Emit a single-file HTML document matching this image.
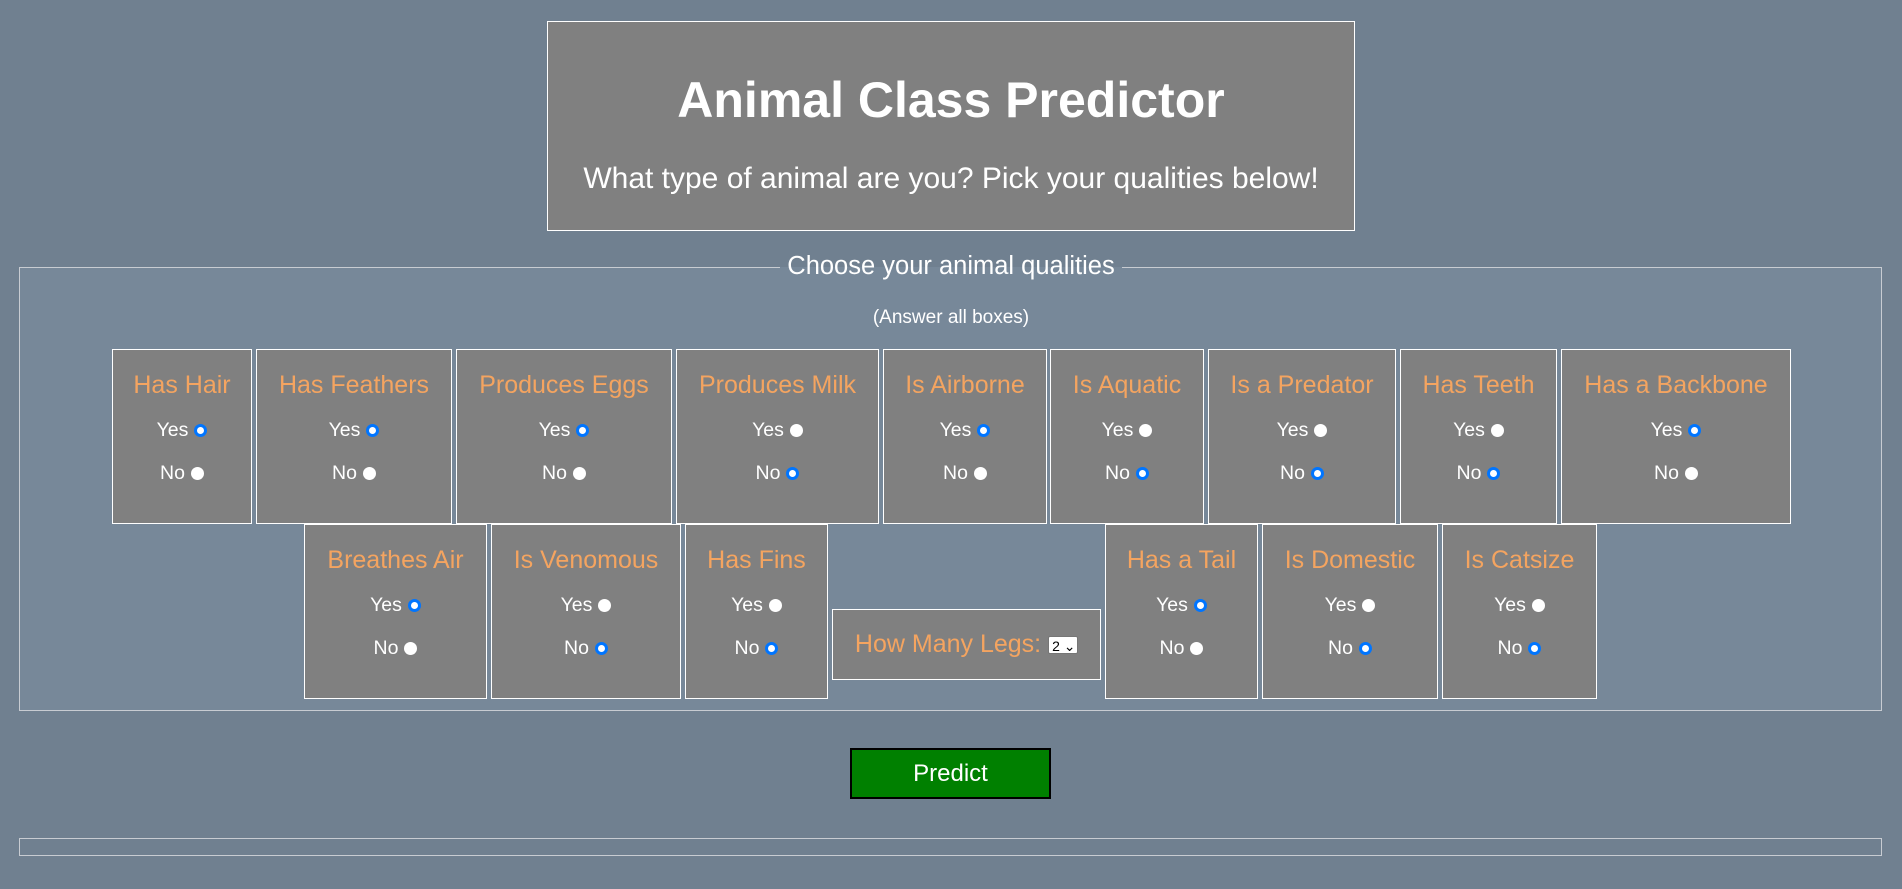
<!DOCTYPE html>
<html><head><meta charset="utf-8"><style>
*{box-sizing:border-box;margin:0;padding:0}
body{width:1902px;height:889px;background:#708090;font-family:"Liberation Sans",Arial,sans-serif;position:relative;overflow:hidden;color:#fff}
.abs{position:absolute}
.hdr{left:547px;top:21px;width:808px;height:210px;background:#808080;border:1px solid #fff;text-align:center}
.hdr h1{position:absolute;left:0;right:0;top:78px;font-size:50px;line-height:56px;margin-top:-28px;font-weight:bold}
.hdr p{position:absolute;left:0;right:0;top:157px;font-size:30px;line-height:34px;margin-top:-17px}
.fs{left:19px;top:267px;width:1863px;height:444px;background:#778899;border:1px solid #c8ccd2}
.gap{left:780px;top:267px;width:342px;height:1px;background:#778899}
.legend{left:700px;top:251px;width:502px;height:30px;text-align:center;font-size:25.5px;line-height:30px}
.note{left:0;width:1902px;top:307px;text-align:center;font-size:19px;line-height:22px}
.box{background:#808080;border:1px solid #fff;text-align:center}
.box .t{position:absolute;left:0;right:0;top:20px;font-size:25px;line-height:30px;color:#f4a460;white-space:nowrap}
.box .y,.box .n{position:absolute;left:0;right:0;font-size:19.5px;line-height:22px}
.box .y{top:69px}.box .n{top:112px}
.r{display:inline-block;width:13px;height:13px;border-radius:50%;background:#fff;vertical-align:-1px;margin-left:6px}
.s{background:#fff;border:3px solid #0075ff;width:13px;height:13px}
.legs{left:832px;top:609px;width:269px;height:71px;background:#808080;border:1px solid #fff;text-align:center;font-size:25px;line-height:69px;color:#f4a460;white-space:nowrap}
.sel{display:inline-block;width:30px;height:18px;background:#fff;color:#000;font-size:14px;line-height:18px;vertical-align:middle;text-align:left;padding-left:3px;border:1px solid #767676;border-radius:2px}
.btn{left:850px;top:748px;width:201px;height:51px;background:#008000;border:2px solid #000;font-size:24px;line-height:47px;text-align:center}
.fs2{left:19px;top:838px;width:1863px;height:18px;border:1px solid #c8ccd2;background:#708090}
</style></head><body>
<div class="abs hdr"><h1>Animal Class Predictor</h1><p>What type of animal are you? Pick your qualities below!</p></div>
<div class="abs fs"></div>
<div class="abs gap"></div>
<div class="abs legend">Choose your animal qualities</div>
<div class="abs note">(Answer all boxes)</div>

<div class="abs box" style="left:112px;top:349px;width:140px;height:175px"><div class="t">Has Hair</div><div class="y">Yes<span class="r s"></span></div><div class="n">No<span class="r"></span></div></div>
<div class="abs box" style="left:256px;top:349px;width:196px;height:175px"><div class="t">Has Feathers</div><div class="y">Yes<span class="r s"></span></div><div class="n">No<span class="r"></span></div></div>
<div class="abs box" style="left:456px;top:349px;width:216px;height:175px"><div class="t">Produces Eggs</div><div class="y">Yes<span class="r s"></span></div><div class="n">No<span class="r"></span></div></div>
<div class="abs box" style="left:676px;top:349px;width:203px;height:175px"><div class="t">Produces Milk</div><div class="y">Yes<span class="r"></span></div><div class="n">No<span class="r s"></span></div></div>
<div class="abs box" style="left:883px;top:349px;width:164px;height:175px"><div class="t">Is Airborne</div><div class="y">Yes<span class="r s"></span></div><div class="n">No<span class="r"></span></div></div>
<div class="abs box" style="left:1050px;top:349px;width:154px;height:175px"><div class="t">Is Aquatic</div><div class="y">Yes<span class="r"></span></div><div class="n">No<span class="r s"></span></div></div>
<div class="abs box" style="left:1208px;top:349px;width:188px;height:175px"><div class="t">Is a Predator</div><div class="y">Yes<span class="r"></span></div><div class="n">No<span class="r s"></span></div></div>
<div class="abs box" style="left:1400px;top:349px;width:157px;height:175px"><div class="t">Has Teeth</div><div class="y">Yes<span class="r"></span></div><div class="n">No<span class="r s"></span></div></div>
<div class="abs box" style="left:1561px;top:349px;width:230px;height:175px"><div class="t">Has a Backbone</div><div class="y">Yes<span class="r s"></span></div><div class="n">No<span class="r"></span></div></div>

<div class="abs box" style="left:304px;top:524px;width:183px;height:175px"><div class="t">Breathes Air</div><div class="y">Yes<span class="r s"></span></div><div class="n">No<span class="r"></span></div></div>
<div class="abs box" style="left:491px;top:524px;width:190px;height:175px"><div class="t">Is Venomous</div><div class="y">Yes<span class="r"></span></div><div class="n">No<span class="r s"></span></div></div>
<div class="abs box" style="left:685px;top:524px;width:143px;height:175px"><div class="t">Has Fins</div><div class="y">Yes<span class="r"></span></div><div class="n">No<span class="r s"></span></div></div>
<div class="abs legs">How Many Legs: <span class="sel">2 &#8964;</span></div>
<div class="abs box" style="left:1105px;top:524px;width:153px;height:175px"><div class="t">Has a Tail</div><div class="y">Yes<span class="r s"></span></div><div class="n">No<span class="r"></span></div></div>
<div class="abs box" style="left:1262px;top:524px;width:176px;height:175px"><div class="t">Is Domestic</div><div class="y">Yes<span class="r"></span></div><div class="n">No<span class="r s"></span></div></div>
<div class="abs box" style="left:1442px;top:524px;width:155px;height:175px"><div class="t">Is Catsize</div><div class="y">Yes<span class="r"></span></div><div class="n">No<span class="r s"></span></div></div>

<div class="abs btn">Predict</div>
<div class="abs fs2"></div>
</body></html>
